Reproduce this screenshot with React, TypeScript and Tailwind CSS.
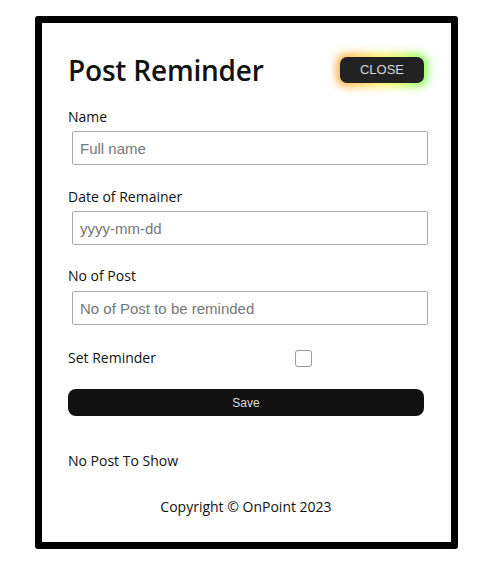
import { useState } from 'react';

export default function App() {
  const [name, setName] = useState('');
  const [date, setDate] = useState('');
  const [count, setCount] = useState('');
  const [remind, setRemind] = useState(false);

  const inputCls =
    'ml-[4px] block h-[34px] w-full rounded-[2px] border border-[#a9a9a9] bg-white px-[7px] text-[15px] text-[#333] placeholder:text-[#777] outline-none font-[Arial,sans-serif]';

  return (
    <div className="min-h-[573px] w-[502px] bg-white pt-[16px] pl-[35px] font-['Open_Sans',sans-serif]">
      <div className="h-[533px] w-[423px] rounded-[3px] border-[7px] border-black bg-white pl-[26px] pr-[27px] pt-[32px] text-[#111]">
        <div className="flex h-[30px] items-center justify-between">
          <h1 className="text-[28px] font-semibold leading-[30px] tracking-[-0.2px]">Post Reminder</h1>
          <div className="relative">
            <div className="absolute -inset-[3px] rounded-[9px] bg-gradient-to-r from-[#ff9a2a] via-[#fff04a] to-[#5cff3a] blur-[5px]" />
            <button
              type="button"
              className="relative flex h-[26px] w-[84px] items-center justify-center rounded-[7px] bg-[#222] text-[13px] text-[#d8d8d8] font-[Arial,sans-serif]"
            >
              CLOSE
            </button>
          </div>
        </div>

        <form className="mt-[22px]" onSubmit={(e) => e.preventDefault()}>
          <label className="block text-[14px] leading-[20px]">Name</label>
          <input
            className={`mt-[4px] ${inputCls}`}
            placeholder="Full name"
            value={name}
            onChange={(e) => setName(e.target.value)}
          />

          <label className="mt-[22px] block text-[14px] leading-[20px]">Date of Remainer</label>
          <input
            className={`mt-[4px] ${inputCls}`}
            placeholder="yyyy-mm-dd"
            value={date}
            onChange={(e) => setDate(e.target.value)}
          />

          <label className="mt-[21px] block text-[14px] leading-[20px]">No of Post</label>
          <input
            className={`mt-[5px] ${inputCls}`}
            placeholder="No of Post to be reminded"
            value={count}
            onChange={(e) => setCount(e.target.value)}
          />

          <div className="mt-[23px] flex h-[20px] items-center">
            <span className="w-[227px] text-[14px] leading-[20px]">Set Reminder</span>
            <button
              type="button"
              onClick={() => setRemind((p) => !p)}
              className={`h-[17px] w-[17px] rounded-[3px] border border-[#9a9a9a] ${remind ? 'bg-blue-600' : 'bg-white'}`}
            />
          </div>

          <button
            type="submit"
            className="mt-[21px] flex h-[27px] w-full items-center justify-center rounded-[8px] bg-[#111] text-[12px] text-[#ddd] font-[Arial,sans-serif]"
          >
            Save
          </button>
        </form>

        <p className="mt-[35px] text-[14px] leading-[20px]">No Post To Show</p>
        <p className="mt-[26px] text-center text-[14px] leading-[20px]">Copyright © OnPoint 2023</p>
      </div>
    </div>
  );
}
